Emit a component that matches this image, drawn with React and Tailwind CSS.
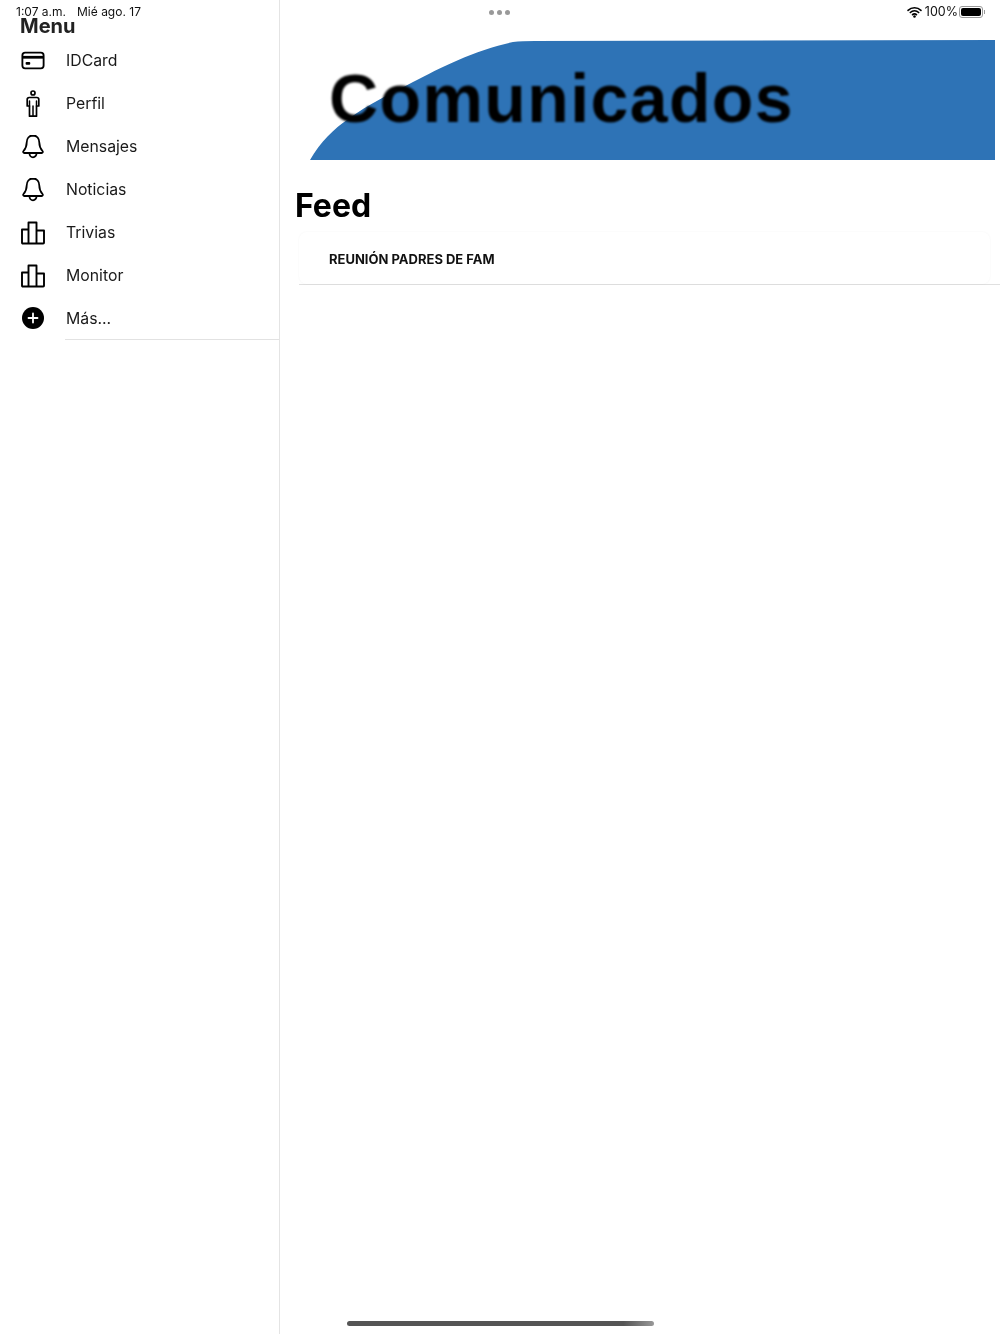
import React from "react";

const stroke = { fill: "none", stroke: "#000", strokeWidth: 2, strokeLinecap: "round", strokeLinejoin: "round" };

const CardIcon = () => (
  <svg width="24" height="19" viewBox="0 0 26 20">
    <rect x="1.500" y="1.500" width="23" height="17" rx="3" {...stroke} />
    <rect x="1.500" y="5" width="23" height="3" fill="#000" />
    <rect x="5" y="11.500" width="5" height="3" rx="1" fill="#000" />
  </svg>
);
const PersonIcon = () => (
  <svg width="14" height="28" viewBox="0 0 14 28">
    <circle cx="7" cy="3" r="2" {...stroke} strokeWidth="1.700" />
    <path d="M3.200 7.500h7.600a2 2 0 0 1 2 2v6.500h-2.300v10.200H3.500V16H1.200V9.500a2 2 0 0 1 2-2z" {...stroke} strokeWidth="1.700" />
    <path d="M7 16v10M3.500 11v5M10.500 11v5" {...stroke} strokeWidth="1.500" />
  </svg>
);
const BellIcon = () => (
  <svg width="22" height="25" viewBox="0 0 22 25">
    <path d="M11 1.500c-4 0-6.300 3-6.300 7 0 4.500-1.400 6.500-3.200 8.500-.7.800-.3 2 .8 2h17.400c1.100 0 1.500-1.200.8-2-1.800-2-3.200-4-3.200-8.500 0-4-2.300-7-6.300-7z" {...stroke} strokeWidth="1.800" />
    <path d="M7.500 19.500a3.500 3.800 0 0 0 7 0" {...stroke} strokeWidth="1.800" />
  </svg>
);
const BarsIcon = () => (
  <svg width="26" height="24" viewBox="0 0 26 24">
    <path d="M2 8.500h6.500v14H2.800a.8.800 0 0 1-.8-.8zM8.500 1.500h8v21h-8zM16.500 9.500H24v12.200a.8.800 0 0 1-.8.8h-6.700z" {...stroke} strokeWidth="1.900" />
  </svg>
);
const PlusIcon = () => (
  <svg width="22" height="22" viewBox="0 0 22 22" className="-mt-px">
    <circle cx="11" cy="11" r="11" fill="#000" />
    <path d="M11 6.500v9M6.500 11h9" stroke="#fff" strokeWidth="1.800" strokeLinecap="round" />
  </svg>
);

const items = [
  ["IDCard", <CardIcon />],
  ["Perfil", <PersonIcon />],
  ["Mensajes", <BellIcon />],
  ["Noticias", <BellIcon />],
  ["Trivias", <BarsIcon />],
  ["Monitor", <BarsIcon />],
  ["Más...", <PlusIcon />],
];

export default function App() {
  return (
    <div className="relative flex h-[1334px] w-[1000px] overflow-hidden bg-white font-['Inter',sans-serif] text-black blur-[0.35px]">
      {/* Status bar */}
      <div className="absolute left-0 top-[5px] flex h-[14px] w-full items-center justify-between pl-[16px] pr-[15px] text-[12px] leading-[14px] text-[#111]">
        <div className="flex gap-[11px]">
          <span>1:07 a.m.</span>
          <span>Mié ago. 17</span>
        </div>
        <div className="flex items-center">
          <svg width="15" height="12" viewBox="0 0 14 11" className="mr-[3px]">
            <path d="M1 4a8.500 8.500 0 0 1 12 0M3.100 6a5.500 5.500 0 0 1 7.800 0M5.200 8a2.500 2.500 0 0 1 3.600 0" fill="none" stroke="#000" strokeWidth="1.500" strokeLinecap="round" />
            <circle cx="7" cy="9.700" r="1.200" fill="#000" />
          </svg>
          <span className="mr-[1px] text-[12.500px]">100%</span>
          <div className="flex items-center">
            <div className="flex h-[12px] w-[24px] items-center rounded-[3px] border border-[#999] p-[1px]">
              <div className="h-full w-full rounded-[2px] bg-black" />
            </div>
            <div className="ml-[1px] h-[4px] w-[1px] bg-[#999]" />
          </div>
        </div>
      </div>
      <div className="absolute left-[489px] top-[10px] flex gap-[3px]">
        <div className="h-[5px] w-[5px] rounded-full bg-[#999]" />
        <div className="h-[5px] w-[5px] rounded-full bg-[#999]" />
        <div className="h-[5px] w-[5px] rounded-full bg-[#999]" />
      </div>

      {/* Sidebar */}
      <aside className="h-full w-[280px] shrink-0 border-r border-[#e4e4e4]">
        <h1 className="pl-[20px] pt-[14px] text-[20px] font-bold leading-[24px] text-[#222]">Menu</h1>
        <ul className="mt-[1px]">
          {items.map(([label, icon]) => (
            <li key={label} className="flex h-[43px] items-center">
              <div className="flex w-[66px] justify-center">{icon}</div>
              <span className="pt-[1px] text-[15.800px] leading-[20px] text-[#1a1a1a]">{label}</span>
            </li>
          ))}
        </ul>
        <div className="-mt-px ml-[65px] h-px bg-[#e2e2e2]" />
      </aside>

      {/* Main */}
      <main className="min-w-0 flex-1 pt-[40px]">
        <div className="relative ml-[30px] h-[120px] w-[685px]">
          <svg className="absolute inset-0 h-full w-full" viewBox="0 0 685 120" preserveAspectRatio="none">
            <path d="M0 120C10 102 25 88 37 80C60 63 80 54 103 42C130 28 165 10 203 2Q212 1 225 1L685 0V120Z" fill="#2e73b6" />
          </svg>
          <div className="relative pl-[19px] pt-[19px] font-['Liberation_Sans',sans-serif] text-[68px] font-bold leading-[78px] tracking-[1.400px] blur-[0.8px]">
            Comunicados
          </div>
        </div>
        <h2 className="pl-[15px] pt-[26px] text-[32px] font-bold leading-[40px]">Feed</h2>
        <div className="ml-[19px] mt-[6px] h-[53px] border-b border-[#e0e0e0]">
          <div className="mr-[10px] flex h-full items-center rounded-[8px] pl-[30px] pt-[2px] shadow-[0_0_2px_rgba(0,0,0,0.05)]">
            <span className="text-[13px] font-bold leading-[16px] text-[#111]">REUNIÓN PADRES DE FAM</span>
          </div>
        </div>
      </main>

      {/* Home indicator */}
      <div className="absolute bottom-[8px] left-[347px] h-[5px] w-[307px] rounded-full bg-linear-to-r from-[#555] via-[#555] via-90% to-[#999] blur-[0.5px]" />
    </div>
  );
}
